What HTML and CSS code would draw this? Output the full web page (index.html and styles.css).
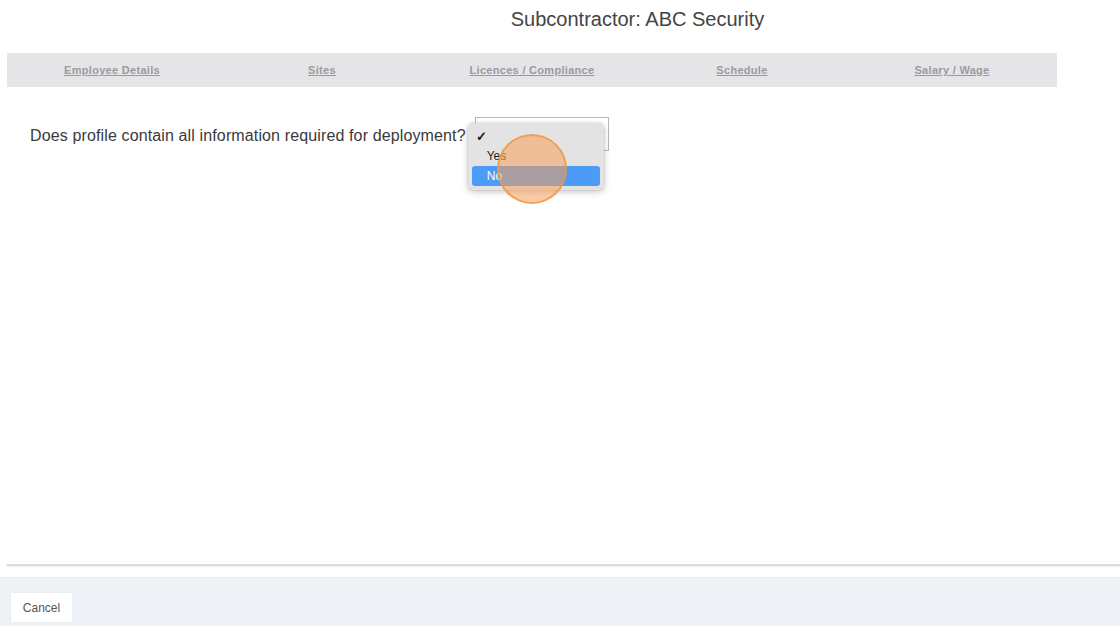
FILE: index.html
```html
<!DOCTYPE html>
<html>
<head>
<meta charset="utf-8">
<link rel="stylesheet" href="styles.css">
</head>
<body>
<div class="page">
  <div class="main">
    <h1 class="title">Subcontractor: ABC Security</h1>
    <nav class="tabs">
      <a class="tab" href="#">Employee Details</a>
      <a class="tab" href="#">Sites</a>
      <a class="tab" href="#">Licences / Compliance</a>
      <a class="tab" href="#">Schedule</a>
      <a class="tab" href="#">Salary / Wage</a>
    </nav>
    <div class="question">
      <span class="q-text">Does profile contain all information required for deployment?</span>
      <div class="select-wrap">
        <div class="select"><span class="arrow">&#8250;</span></div>
        <div class="menu">
          <div class="opt"><span class="check">&#10003;</span></div>
          <div class="opt"><span class="label">Yes</span></div>
          <div class="opt selected"><span class="label">No</span></div>
        </div>
        <div class="cursor"></div>
      </div>
    </div>
  </div>
  <div class="gap"></div>
  <footer class="footer">
    <button class="btn">Cancel</button>
  </footer>
</div>
</body>
</html>
```
FILE: styles.css
```css
html, body {
  margin: 0;
  padding: 0;
  background: #fff;
  font-family: "Liberation Sans", Arial, sans-serif;
}
.page {
  display: flex;
  flex-direction: column;
  height: 626px;
  overflow: hidden;
}
.main {
  flex: 1;
  margin-left: 7px;
  border-bottom: 2px solid #dcdcdc;
  box-shadow: 0 1px 1px rgba(0,0,0,0.04);
}
.title {
  margin: 0;
  padding: 7px 0 0 148px;
  height: 53px;
  box-sizing: border-box;
  text-align: center;
  font-weight: normal;
  font-size: 20px;
  line-height: 24px;
  color: #444;
}
.tabs {
  display: grid;
  grid-template-columns: repeat(5, 210px);
  height: 34px;
  background: #e5e5e8;
  width: 1050px;
  align-items: center;
  justify-items: center;
}
.tab {
  font-size: 11px;
  font-weight: bold;
  color: #9a9a9e;
  text-decoration: underline;
  letter-spacing: 0.3px;
}
.question {
  display: flex;
  align-items: center;
  margin-top: 30px;
  padding-left: 23px;
  height: 34px;
}
.q-text {
  font-size: 16px;
  color: #3a3a3a;
  letter-spacing: 0.13px;
  padding-top: 3px;
}
.select-wrap {
  position: relative;
  margin-left: 9px;
}
.select {
  width: 134px;
  height: 34px;
  box-sizing: border-box;
  border: 1px solid #b8b8b8;
  background: #fff;
  position: relative;
}
.arrow {
  position: absolute;
  right: 3px;
  top: 7px;
  font-size: 11px;
  color: #888;
}
.menu {
  position: absolute;
  left: -7px;
  top: 6px;
  width: 136px;
  box-sizing: border-box;
  padding: 4px 4px 4px 4px;
  background: #e3e3e3;
  border-radius: 5px;
  box-shadow: 0 2px 6px rgba(0,0,0,0.22), 0 0 0 1px rgba(0,0,0,0.05);
}
.opt {
  height: 19px;
  display: flex;
  align-items: center;
  font-size: 12px;
  color: #1e1e1e;
  border-radius: 3px;
}
.opt.selected {
  background: #4b9bf7;
  color: #fff;
  height: 20px;
  margin-top: 1px;
}
.check {
  padding-left: 4px;
  font-size: 13px;
  font-weight: bold;
}
.label {
  padding-left: 15px;
}
.cursor {
  position: absolute;
  left: 22px;
  top: 17px;
  width: 70px;
  height: 70px;
  box-sizing: border-box;
  border-radius: 50%;
  background: rgba(245, 160, 90, 0.55);
  border: 2px solid rgba(236, 150, 70, 0.75);
}
.gap {
  height: 11px;
  flex: none;
}
.footer {
  flex: none;
  height: 49px;
  box-sizing: border-box;
  background: #eef1f5;
  border-top: 1px solid #e6e9ee;
  padding: 15px 0 0 11px;
}
.btn {
  width: 61px;
  height: 29px;
  background: #fff;
  border: none;
  box-shadow: 0 0 1px rgba(0,0,0,0.08);
  font-family: "Liberation Sans", Arial, sans-serif;
  font-size: 12px;
  color: #555;
  padding: 0;
}
```
